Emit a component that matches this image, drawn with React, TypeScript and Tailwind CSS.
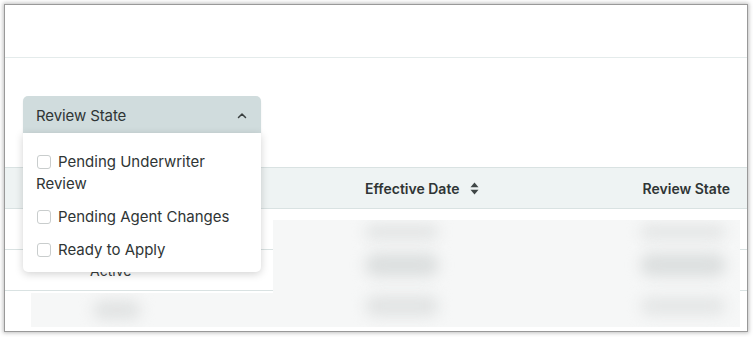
import React from "react";

function Checkbox() {
  return (
    <span className="inline-block w-[14px] h-[14px] rounded-[3px] border border-[#c9cdcd] bg-white align-[-2px] mr-[7px] ml-[1px]" />
  );
}

function SortIcon() {
  return (
    <svg width="9" height="13" viewBox="0 0 9 13" className="ml-[10px]">
      <path d="M4.5 0.5 L8.5 5.3 L0.5 5.3 Z" fill="#3f4646" />
      <path d="M4.5 12.5 L8.5 7.7 L0.5 7.7 Z" fill="#3f4646" />
    </svg>
  );
}

function BlobRow({ h, a, b }: { h: string; a: string; b: string }) {
  return (
    <div className={"flex items-center pl-[92px] " + h}>
      <div className={"w-[74px] rounded-full blur-[7px] " + a} />
      <div className={"ml-[201px] w-[86px] rounded-full blur-[7px] " + b} />
    </div>
  );
}

export default function App() {
  return (
    <div className="w-[753px] h-[337px] bg-white pt-[4px] pl-[4px] font-['Inter',sans-serif] text-[#333a3a]">
      <div className="relative w-[744px] h-[328px] border border-[#999999] shadow-[0_0_4px_1px_rgba(0,0,0,0.25)] bg-white overflow-hidden">
        {/* top bar */}
        <div className="h-[53px] border-b border-[#e4ebeb]" />

        {/* filter area */}
        <div className="h-[109px] pt-[38px] pl-[18px]">
          <div className="relative w-[238px] z-10">
            <div className="h-[37px] flex items-center justify-between pl-[13px] pr-[14px] pt-[4px] bg-[#d0dcdd] rounded-t-[5px] shadow-[0_2px_2px_rgba(0,0,0,0.08)]">
              <span className="text-[15px] text-[#2f3535] tracking-[-0.1px]">Review State</span>
              <svg width="10" height="7" viewBox="0 0 10 7" className="mt-[-2px]">
                <path d="M1.5 5.5 L5 2 L8.5 5.5" stroke="#3a4040" strokeWidth="1.5" fill="none" strokeLinecap="round" strokeLinejoin="round" />
              </svg>
            </div>
            <div className="absolute left-0 top-[37px] w-[238px] bg-white rounded-b-[5px] shadow-[0_2px_8px_rgba(0,0,0,0.18)] pt-[18px] pb-[11px] pl-[13px] pr-[12px] flex flex-col gap-[11px] text-[15px] leading-[22px] text-[#2f3535]">
              <div>
                <Checkbox />
                Pending Underwriter Review
              </div>
              <div>
                <Checkbox />
                Pending Agent Changes
              </div>
              <div>
                <Checkbox />
                Ready to Apply
              </div>
            </div>
          </div>
        </div>

        {/* table header */}
        <div className="h-[42px] bg-[#eef3f3] border-y border-[#d9e2e2] flex items-center pl-[360px] pr-[17px] text-[14px] font-semibold text-[#2f3535]">
          <div className="flex items-center">
            Effective Date
            <SortIcon />
          </div>
          <div className="ml-auto">Review State</div>
        </div>

        {/* table body */}
        <div className="relative">
          <div className="h-[41px] border-b border-[#d9e2e2]" />
          <div className="h-[41px] border-b border-[#d9e2e2] flex items-center pl-[85px] text-[14px] text-[#3a4040]">
            Active
          </div>
          <div className="h-[41px]" />

          {/* redaction overlays */}
          <div className="absolute left-[268px] top-[11px] w-[467px] h-[107px] bg-[#f6f7f7] flex flex-col overflow-hidden">
            <BlobRow h="h-[24px]" a="h-[16px] bg-[#e3e5e5]" b="h-[16px] bg-[#e4e6e6]" />
            <BlobRow h="h-[41px]" a="h-[24px] bg-[#dcdfdf]" b="h-[24px] bg-[#dcdfdf]" />
            <BlobRow h="h-[42px]" a="h-[22px] bg-[#e2e4e4]" b="h-[20px] bg-[#e5e7e7]" />
          </div>
          <div className="absolute left-[26px] top-[84px] w-[242px] h-[34px] bg-[#f6f7f7] flex items-center pl-[62px] overflow-hidden">
            <div className="w-[48px] h-[20px] rounded-full blur-[7px] bg-[#e1e3e3]" />
          </div>
        </div>
      </div>
    </div>
  );
}
